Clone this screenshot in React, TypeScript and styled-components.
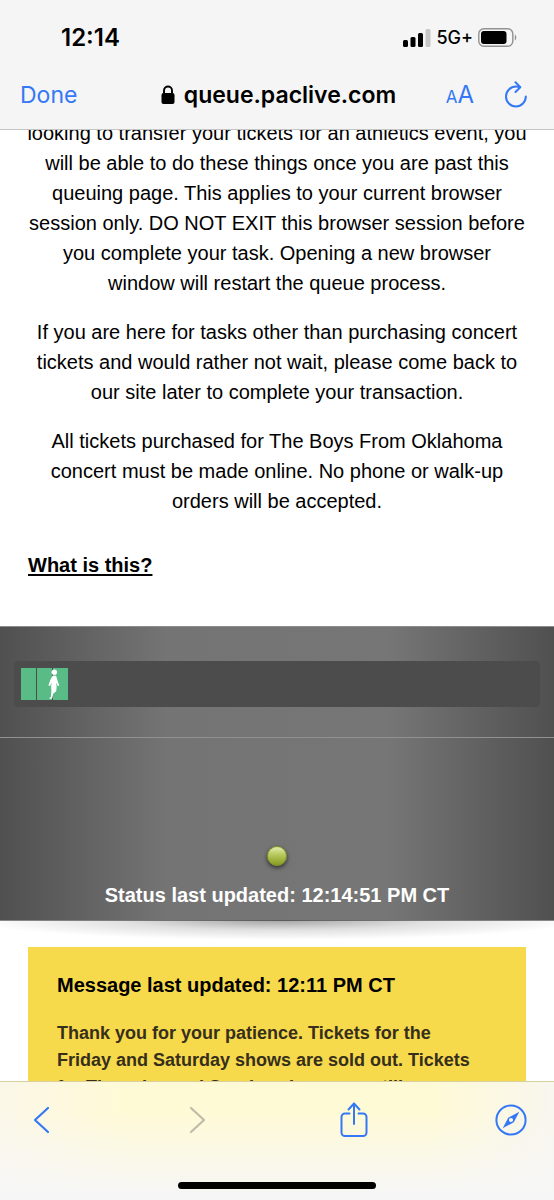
import React from "react";
import styled, { createGlobalStyle } from "styled-components";

const GlobalStyle = createGlobalStyle`
  * { box-sizing: border-box; }
  body { margin: 0; background: #fff; }
  h2, p { margin: 0; }
`;

const ui = `Inter, "Liberation Sans", sans-serif`;
const blue = "#3478f6";

const Screen = styled.div`
  display: flex;
  flex-direction: column;
  height: 100vh;
  overflow: hidden;
  background: #fff;
  color: #000;
  font-family: "Liberation Sans", Arial, sans-serif;
`;

const Header = styled.header`
  position: relative;
  z-index: 1;
  flex: none;
  background: #f5f5f5;
  border-bottom: 1px solid #c4c4c4;
  font-family: ${ui};
`;

const StatusBar = styled.div`
  display: flex;
  align-items: center;
  justify-content: space-between;
  height: 60px;
  padding: 15px 37px 0 61px;
`;

const Clock = styled.time`
  font-size: 24px;
  font-weight: 600;
  line-height: 28px;
`;

const Indicators = styled.div`
  display: flex;
  align-items: center;
  gap: 5px;
  font-size: 18px;
  font-weight: 500;
  line-height: 28px;
`;

const NavBar = styled.nav`
  display: grid;
  grid-template-columns: 1fr auto 1fr;
  align-items: center;
  height: 69px;
  padding: 0 17px 0 20px;
`;

const BarButton = styled.button`
  display: inline-flex;
  align-items: center;
  justify-content: center;
  padding: 0;
  border: 0;
  background: none;
  color: ${blue};
  font: 400 23px/28px ${ui};

  &:disabled { color: #bdbba9; }
`;

const DoneButton = styled(BarButton)`
  justify-self: start;
`;

const Address = styled.div`
  display: flex;
  align-items: center;
  gap: 9px;
  font-size: 23px;
  font-weight: 600;
  line-height: 28px;
`;

const NavActions = styled.div`
  display: flex;
  align-items: center;
  justify-content: flex-end;
  gap: 30px;
  padding-right: 9px;
`;

const TextSize = styled(BarButton)`
  align-items: baseline;
  padding-top: 3px;
  font-size: 24px;

  small { font-size: 17px; }
`;

const Page = styled.main`
  flex: 1;
  min-height: 0;
  overflow: hidden;
`;

const Notice = styled.section`
  display: flex;
  flex-direction: column;
  gap: 19px;
  margin-top: -12px;
  padding: 0 27px;
  font-size: 20px;
  line-height: 30px;
  text-align: center;
`;

const HelpLink = styled.a`
  align-self: flex-start;
  margin: 15px 1px 46px;
  color: #000;
  font-weight: 700;
  text-underline-offset: 2px;
`;

const QueuePanel = styled.section`
  position: relative;
  border: 1px solid #8c8c8c;
  border-width: 1px 0;
  background: linear-gradient(90deg, #505050, #747474 30%, #767676 70%, #505050);
  color: #fff;

  &::after {
    content: "";
    position: absolute;
    top: 100%;
    left: 0;
    right: 0;
    height: 20px;
    background: radial-gradient(55% 100% at 50% 0, rgba(0, 0, 0, 0.36), rgba(0, 0, 0, 0.12) 50%, transparent);
  }
`;

const ProgressArea = styled.div`
  padding: 34px 14px 30px;
  border-bottom: 1px solid #919191;
`;

const Track = styled.div`
  display: flex;
  gap: 1px;
  height: 46px;
  padding: 7px;
  border-radius: 4px;
  background: #4c4c4c;
`;

const Block = styled.span`
  display: block;
  width: 15px;
  height: 32px;
  background: #59bb86;
`;

const Walker = styled.svg`
  position: absolute;
  top: 42px;
  left: 48px;
`;

const StatusArea = styled.div`
  display: flex;
  flex-direction: column;
  align-items: center;
  gap: 14px;
  padding: 108px 28px 10px;
`;

const Led = styled.span`
  width: 20px;
  height: 20px;
  border: 1px solid #7f9128;
  border-radius: 50%;
  background: linear-gradient(#e3edab, #b5c75a 45%, #879b20);
  box-shadow: 0 2px 4px rgba(0, 0, 0, 0.6);
`;

const StatusText = styled.p`
  font-size: 20px;
  font-weight: 700;
  line-height: 30px;
`;

const Message = styled.section`
  position: relative;
  z-index: 1;
  margin: 26px 28px 0;
  padding: 23px 29px;
  background: #f7d94c;
  font-weight: 700;
`;

const MessageTitle = styled.h2`
  font-size: 20px;
  line-height: 30px;
`;

const MessageText = styled.p`
  margin-top: 20px;
  color: #352f1b;
  font-size: 18px;
  line-height: 27px;
`;

const Footer = styled.footer`
  position: relative;
  z-index: 1;
  flex: none;
  padding: 17px 0 11px;
  border-top: 1px solid #d6cfa0;
  background:
    linear-gradient(rgba(246, 246, 246, 0) 25%, #f6f6f6 95%),
    linear-gradient(90deg, #fbf7e8, #fffad6 22%, #fffad6 78%, #f8f6ee);
`;

const Toolbar = styled.nav`
  display: flex;
  align-items: center;
  justify-content: space-between;
  height: 42px;
  padding: 0 27px 0 25px;

  button { width: 32px; }
`;

const HomeIndicator = styled.div`
  width: 198px;
  height: 7px;
  margin: 41px auto 0;
  border-radius: 4px;
  background: #000;
`;

const Signal = () => (
  <svg width="28" height="18" viewBox="0 0 28 18" aria-hidden="true">
    <rect x="0" y="11" width="5" height="7" rx="1.5" />
    <rect x="7.5" y="8" width="5" height="10" rx="1.5" />
    <rect x="15" y="4" width="5" height="14" rx="1.5" />
    <rect x="22.5" y="0" width="5" height="18" rx="1.5" fill="#c6c6c6" />
  </svg>
);

const Battery = () => (
  <svg width="39" height="19" viewBox="0 0 39 19" aria-hidden="true">
    <rect x="0.8" y="0.8" width="34" height="17.4" rx="5" fill="none" stroke="#929292" strokeWidth="1.4" />
    <rect x="3" y="3" width="25.5" height="13" rx="3" />
    <path d="M36.8 6.5c2 .8 2 5.2 0 6z" fill="#929292" />
  </svg>
);

const Lock = () => (
  <svg width="14" height="20" viewBox="0 0 14 20" aria-hidden="true">
    <rect x="0.5" y="8" width="13" height="11" rx="2" />
    <path d="M3 9V5.5a4 4 0 0 1 8 0V9" fill="none" stroke="#000" strokeWidth="1.9" />
  </svg>
);

const Reload = () => (
  <svg width="24" height="28" viewBox="0 0 24 28" fill="none" stroke="currentColor" strokeWidth="2" strokeLinecap="round" strokeLinejoin="round" aria-hidden="true">
    <path d="M21.8 15.5a9.9 9.9 0 1 1-9.9-9.9c1.5 0 2.8.2 3.8.5" />
    <path d="M11.5 1.3l4.8 5-4.8 4.7" />
  </svg>
);

const Chevron = ({ forward = false }: { forward?: boolean }) => (
  <svg width="17" height="28" viewBox="0 0 17 28" fill="none" stroke="currentColor" strokeWidth="2.2" strokeLinecap="round" strokeLinejoin="round" aria-hidden="true">
    <path d={forward ? "M2 2l13 12L2 26" : "M15 2L2 14l13 12"} />
  </svg>
);

const Share = () => (
  <svg width="28" height="36" viewBox="0 0 28 36" fill="none" stroke="currentColor" strokeWidth="2" strokeLinecap="round" strokeLinejoin="round" aria-hidden="true">
    <path d="M9.5 11.5H5A3.5 3.5 0 0 0 1.5 15v15.500A3.5 3.5 0 0 0 5 34h18a3.5 3.5 0 0 0 3.5-3.5V15a3.5 3.5 0 0 0-3.5-3.5h-4.500" />
    <path d="M14 22V1.5M8.5 7.5L14 1.5l5.5 6" />
  </svg>
);

const Compass = () => (
  <svg width="32" height="32" viewBox="0 0 32 32" aria-hidden="true">
    <circle cx="16" cy="16" r="14.6" fill="none" stroke="currentColor" strokeWidth="2" />
    <path fillRule="evenodd" fill="currentColor" d="M24.3 7.7L18.8 18.3 7.7 24.3 13.2 13.7zM16 13.9a2.1 2.1 0 1 0 0 4.2 2.1 2.1 0 0 0 0-4.2z" />
  </svg>
);

export default function App() {
  return (
    <Screen>
      <GlobalStyle />
      <Header>
        <StatusBar>
          <Clock>12:14</Clock>
          <Indicators>
            <Signal />
            <span>5G+</span>
            <Battery />
          </Indicators>
        </StatusBar>
        <NavBar>
          <DoneButton type="button">Done</DoneButton>
          <Address>
            <Lock />
            <span>queue.paclive.com</span>
          </Address>
          <NavActions>
            <TextSize type="button"><small>A</small>A</TextSize>
            <BarButton type="button" aria-label="Reload"><Reload /></BarButton>
          </NavActions>
        </NavBar>
      </Header>

      <Page>
        <Notice>
          <p>
            looking to transfer your tickets for an athletics event, you will be
            able to do these things once you are past this queuing page. This
            applies to your current browser session only. DO NOT EXIT this
            browser session before you complete your task. Opening a new browser
            window will restart the queue process.
          </p>
          <p>
            If you are here for tasks other than purchasing concert tickets and
            would rather not wait, please come back to our site later to complete
            your transaction.
          </p>
          <p>
            All tickets purchased for The Boys From Oklahoma concert must be made
            online. No phone or walk-up orders will be accepted.
          </p>
          <HelpLink href="#help">What is this?</HelpLink>
        </Notice>

        <QueuePanel>
          <ProgressArea>
            <Track role="progressbar" aria-label="Queue progress">
              <Block />
              <Block />
              <Block />
            </Track>
            <Walker width="12" height="30" viewBox="0 0 12 30" fill="#fff" aria-hidden="true">
              <circle cx="6.3" cy="3.3" r="2.7" />
              <path d="M4.5 6.8h3.600l1.700 5.700 1.500 4-1.300.7-2-3.700.7 4-.5 4.700-3 2.600-1 4.600-2.600.5.100-1.200 1.200-.6.500-6.600-.3-4.300.6-3.700L2 17l-1.600-.5 1.800-5.200z" />
            </Walker>
          </ProgressArea>
          <StatusArea>
            <Led />
            <StatusText>Status last updated: 12:14:51 PM CT</StatusText>
          </StatusArea>
        </QueuePanel>

        <Message>
          <MessageTitle>Message last updated: 12:11 PM CT</MessageTitle>
          <MessageText>
            Thank you for your patience. Tickets for the
            <br />
            Friday and Saturday shows are sold out. Tickets
            <br />
            for Thursday and Sunday shows are still
          </MessageText>
        </Message>
      </Page>

      <Footer>
        <Toolbar>
          <BarButton type="button" aria-label="Back"><Chevron /></BarButton>
          <BarButton type="button" aria-label="Forward" disabled><Chevron forward /></BarButton>
          <BarButton type="button" aria-label="Share"><Share /></BarButton>
          <BarButton type="button" aria-label="Open in Safari"><Compass /></BarButton>
        </Toolbar>
        <HomeIndicator />
      </Footer>
    </Screen>
  );
}
